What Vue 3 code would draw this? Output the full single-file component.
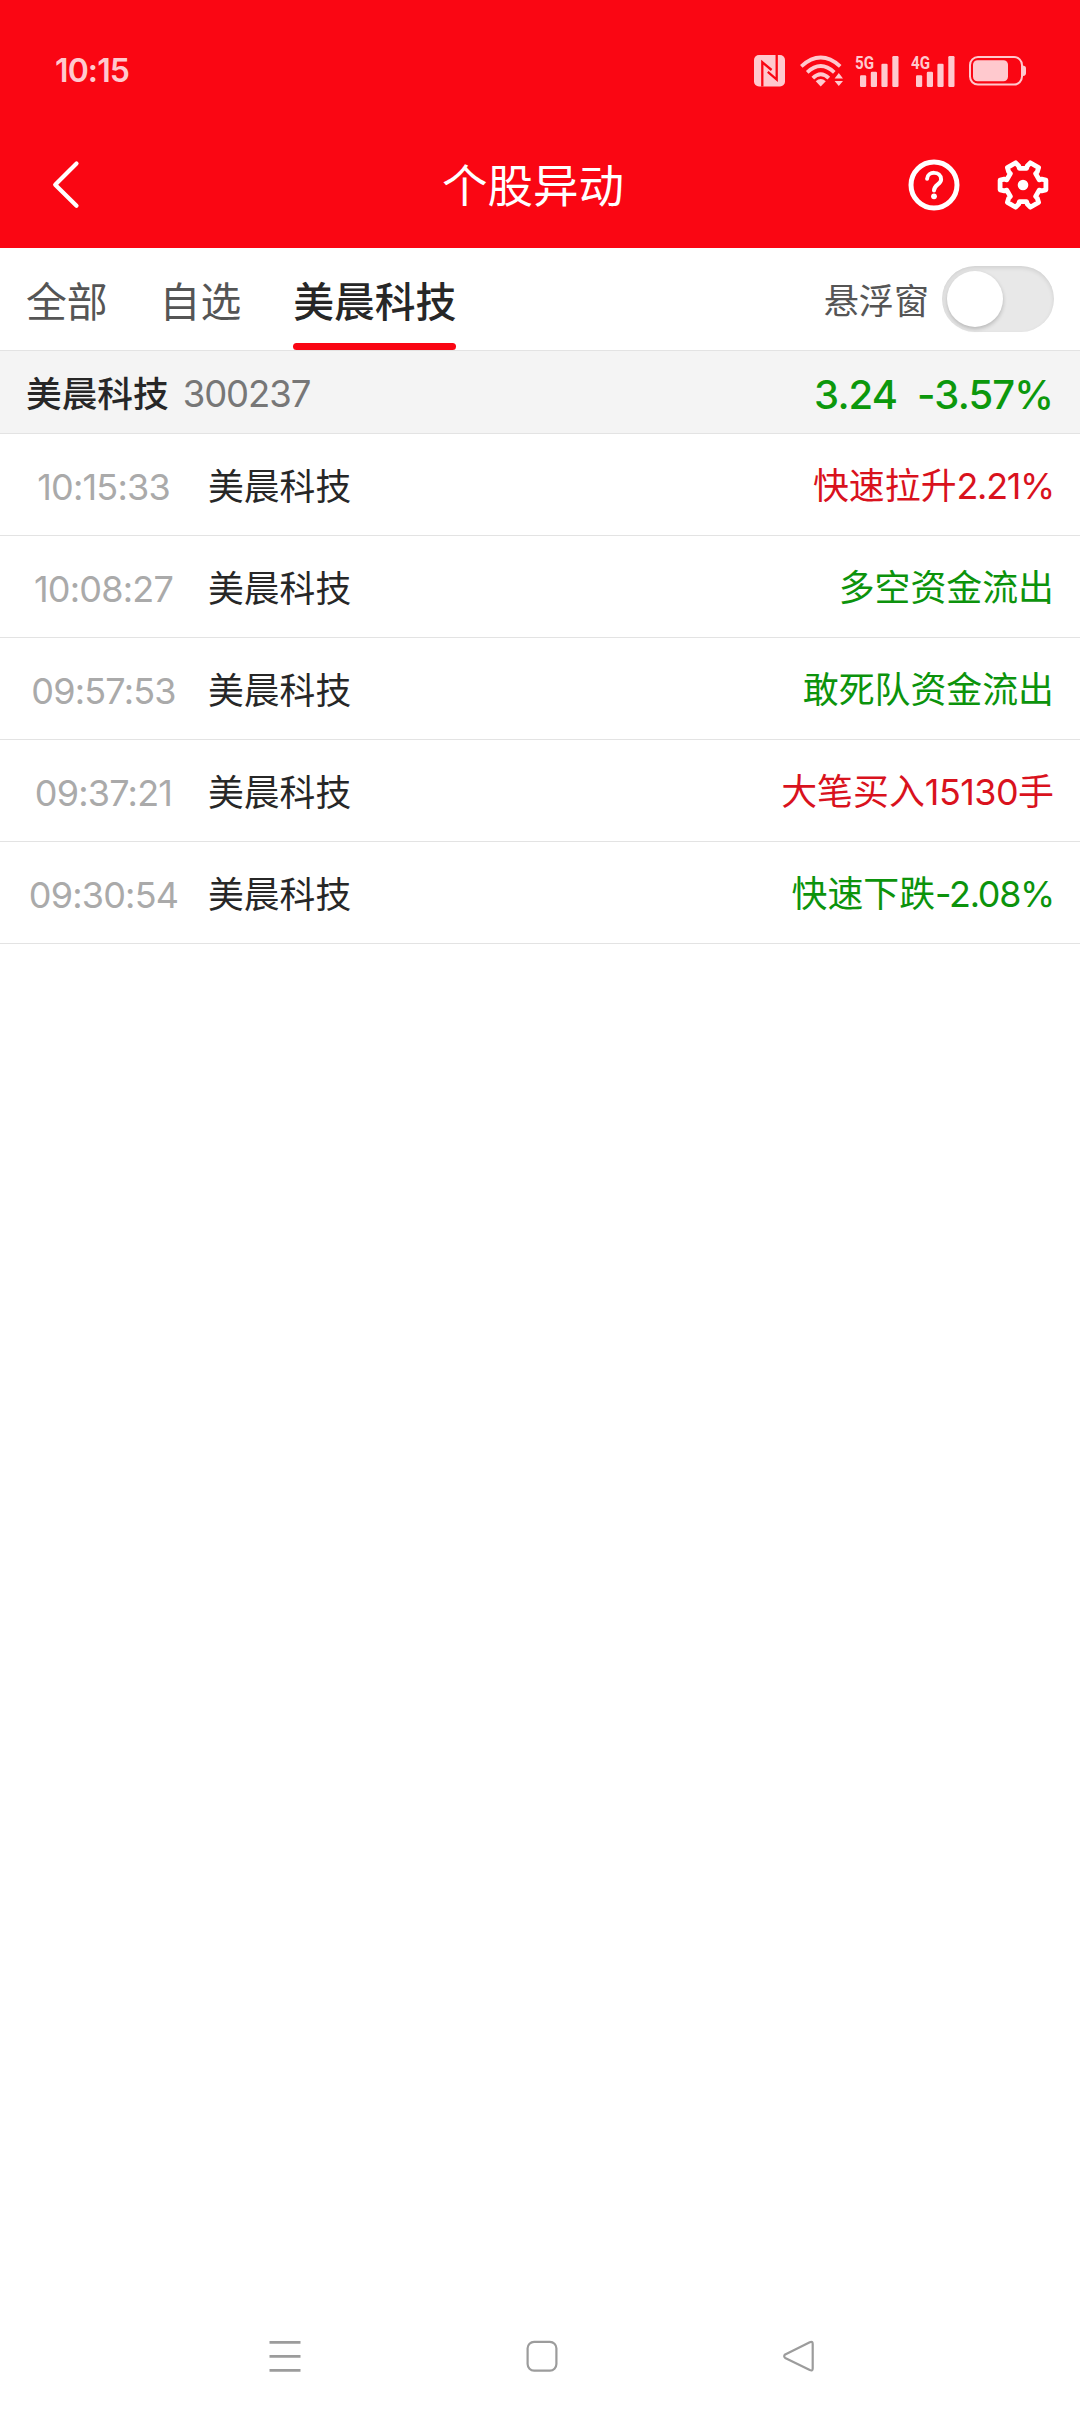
<script setup>
const tabs = [
  { label: '全部', active: false },
  { label: '自选', active: false },
  { label: '美晨科技', active: true },
]

const signals = ['5G', '4G']

const events = [
  { time: '10:15:33', name: '美晨科技', text: '快速拉升', value: '2.21%', unit: '', up: true },
  { time: '10:08:27', name: '美晨科技', text: '多空资金流出', value: '', unit: '', up: false },
  { time: '09:57:53', name: '美晨科技', text: '敢死队资金流出', value: '', unit: '', up: false },
  { time: '09:37:21', name: '美晨科技', text: '大笔买入', value: '15130', unit: '手', up: true },
  { time: '09:30:54', name: '美晨科技', text: '快速下跌', value: '-2.08%', unit: '', up: false },
]

// Six-tooth gear outline, one tooth every 60 degrees
const tooth = [[16.2, -5.2], [18.6, -5.8], [22.9, -4.8], [22.9, 4.8], [18.6, 5.8], [16.2, 5.2]]
const gearPoints = Array.from({ length: 6 }, (_, i) => {
  const a = (i * Math.PI) / 3
  return tooth
    .map(([x, y]) => `${(x * Math.cos(a) - y * Math.sin(a)).toFixed(2)},${(x * Math.sin(a) + y * Math.cos(a)).toFixed(2)}`)
    .join(' ')
}).join(' ')
</script>

<template>
  <div class="screen">
    <header class="top">
      <div class="status">
        <span class="clock">10:15</span>
        <div class="status-icons">
          <svg class="nfc" width="31" height="32" viewBox="0 0 31 32">
            <rect width="31" height="31.5" rx="5" fill="currentColor" />
            <path d="M8.3 31.5V7.2L17.6 15M22.7 0V24.5L13.8 16.8" fill="none" stroke="#fa0613" stroke-width="2.3" />
          </svg>
          <svg class="wifi" width="44" height="32" viewBox="0 0 44 32">
            <g fill="none" stroke="currentColor" stroke-width="3.8">
              <path d="M1.3 11.3Q20.7-6.2 40.2 11.3" />
              <path d="M7.2 17.3Q20.7 4.8 34.3 17.3" />
              <path d="M12.8 23.2Q20.7 15.4 28.8 23.2" />
            </g>
            <path d="M15.7 26.3Q20.7 21.6 25.8 26.3L20.7 31.5Z" fill="currentColor" />
            <path d="M34.6 23.5L38.8 18L43 23.5ZM34.6 26L38.8 31L43 26Z" fill="currentColor" />
          </svg>
          <svg v-for="s in signals" :key="s" class="signal" width="44" height="42" viewBox="0 -4 44 42">
            <text x="0" y="14.500" textLength="19" lengthAdjust="spacingAndGlyphs" class="net">{{ s }}</text>
            <g fill="currentColor">
              <rect x="5" y="21.3" width="6.2" height="11.7" rx="1.2" />
              <rect x="15.8" y="17.7" width="6.2" height="15.3" rx="1.2" />
              <rect x="26.4" y="9.7" width="6.2" height="23.3" rx="1.2" />
              <rect x="37.3" y="2" width="6.2" height="31" rx="1.2" />
            </g>
          </svg>
          <svg class="battery" width="58" height="30" viewBox="0 0 58 30">
            <rect x="1" y="1" width="52" height="27.6" rx="8" fill="none" stroke="currentColor" stroke-width="2" />
            <rect x="4" y="4.3" width="35" height="21" rx="4.5" fill="currentColor" />
            <path d="M54 9.5C56.3 9.8 57 11 57 12.500V17C57 18.600 56.3 19.700 54 20Z" fill="currentColor" />
          </svg>
        </div>
      </div>

      <nav class="titlebar">
        <div class="side">
          <svg width="28" height="50" viewBox="0 0 28 50">
            <path d="M24.500 3.500L3.200 24.700L24.500 45.700" fill="none" stroke="#fff" stroke-width="4.200" stroke-linecap="round" stroke-linejoin="round" />
          </svg>
        </div>
        <h1>个股异动</h1>
        <div class="side right">
          <svg width="52" height="52" viewBox="-26 -26 52 52" fill="none" stroke="#fff">
            <circle r="23" stroke-width="5" />
            <path d="M-6.900-6.200C-6.600-14.200 7.100-14.200 7.100-5.600C7.100-.5 0-.5 0 5.600" stroke-width="4" stroke-linecap="round" />
            <circle cy="11.300" r="2.900" fill="#fff" stroke="none" />
          </svg>
          <svg width="52" height="52" viewBox="-26 -26 52 52">
            <polygon :points="gearPoints" fill="none" stroke="#fff" stroke-width="4.800" stroke-linejoin="round" />
            <circle r="5.300" fill="#fff" />
          </svg>
        </div>
      </nav>
    </header>

    <section class="tabs">
      <div v-for="t in tabs" :key="t.label" class="tab" :class="{ active: t.active }">{{ t.label }}</div>
      <div class="floating">
        <span>悬浮窗</span>
        <div class="switch"><div class="knob"></div></div>
      </div>
    </section>

    <section class="stock">
      <span class="stock-name">美晨科技</span>
      <span class="code">300237</span>
      <span class="price">3.24</span>
      <span class="change">-3.57%</span>
    </section>

    <ul class="events">
      <li v-for="e in events" :key="e.time">
        <span class="time">{{ e.time }}</span>
        <span class="name">{{ e.name }}</span>
        <span class="desc" :class="e.up ? 'up' : 'down'">{{ e.text }}<span v-if="e.value" class="num" :class="{ count: e.unit }">{{ e.value }}</span>{{ e.unit }}</span>
      </li>
    </ul>

    <footer class="sysnav">
      <svg width="32" height="32" viewBox="0 0 32 32" stroke="#9c9c9c" stroke-width="2.800">
        <path d="M.5 2.400H31.500M.5 16.400H31.500M.5 30.400H31.500" />
      </svg>
      <svg width="32" height="32" viewBox="0 0 32 32" fill="none" stroke="#9c9c9c" stroke-width="2.200">
        <rect x="1.600" y="1.800" width="28.800" height="28.800" rx="6.500" />
      </svg>
      <svg width="32" height="32" viewBox="0 0 32 32" fill="none" stroke="#9c9c9c" stroke-width="2.200" stroke-linejoin="round">
        <path d="M2.200 14.400L26.800 2.200Q29.700 1 29.700 4V28.500Q29.700 31.400 26.800 30.100L2.200 18Q.2 16.200 2.200 14.400Z" />
      </svg>
    </footer>
  </div>
</template>

<style>
body {
  margin: 0;
  background: #fff;
}
</style>

<style scoped>
.screen {
  width: 1080px;
  height: 2412px;
  display: flex;
  flex-direction: column;
  background: #fff;
  color: #272727;
  font-family: Inter, 'Noto Sans CJK SC', sans-serif;
  line-height: 1;
  white-space: nowrap;
  overflow: hidden;
}
svg {
  display: block;
  flex: none;
}
.top {
  height: 248px;
  background: #fa0613;
}
.status {
  height: 142px;
  box-sizing: border-box;
  padding: 0 53px 0 55px;
  display: flex;
  justify-content: space-between;
  align-items: center;
  color: #ffc9ce;
}
.clock {
  font-size: 32px;
  font-weight: 600;
  letter-spacing: -0.900px;
}
.status-icons {
  display: flex;
  align-items: center;
}
.wifi {
  margin-left: 15px;
}
.signal {
  margin-left: 12px;
}
.wifi + .signal {
  margin-left: 11px;
}
.battery {
  margin-left: 14px;
}
.net {
  font: 700 18px Roboto, sans-serif;
  fill: currentColor;
}
.titlebar {
  height: 106px;
  box-sizing: border-box;
  padding: 0 31px 21px 52px;
  display: flex;
  align-items: center;
}
.side {
  width: 147px;
  display: flex;
}
.right {
  width: 182px;
  justify-content: flex-end;
  gap: 37px;
}
h1 {
  flex: 1;
  margin: 0;
  padding-top: 4px;
  text-align: center;
  color: #fff;
  font-size: 45.500px;
  font-weight: 400;
}
.tabs {
  height: 102px;
  padding: 0 26px 0 26px;
  display: flex;
  gap: 52px;
  border-bottom: 1px solid #e3e3e3;
}
.tab {
  height: 102px;
  box-sizing: border-box;
  line-height: 108px;
  font-size: 40.800px;
  color: #555;
}
.tab.active {
  color: #272727;
  font-weight: 500;
  position: relative;
}
.tab.active::after {
  content: '';
  position: absolute;
  left: 0;
  right: 0;
  bottom: 0;
  height: 7px;
  border-radius: 4px;
  background: #fa0613;
}
.floating {
  margin-left: auto;
  display: flex;
  align-items: center;
  gap: 13px;
  font-size: 35.100px;
  color: #555;
}
.floating span {
  padding-top: 5px;
}
.switch {
  width: 112px;
  height: 66px;
  box-sizing: border-box;
  padding: 5px;
  border-radius: 33px;
  background: #e8e8e8;
  box-shadow: inset 0 2px 4px rgba(0, 0, 0, 0.1);
}
.knob {
  width: 56px;
  height: 56px;
  border-radius: 50%;
  background: #fff;
  box-shadow: 0 2px 4px rgba(0, 0, 0, 0.22);
}
.stock {
  height: 77px;
  padding: 5px 27px 0 26px;
  display: flex;
  align-items: center;
  background: #f4f4f4;
  border-bottom: 1px solid #e3e3e3;
}
.stock-name {
  font-size: 35.700px;
  font-weight: 500;
}
.code {
  margin-left: 14px;
  font-size: 36.500px;
  letter-spacing: -1.100px;
  color: #777;
}
.price,
.change {
  color: #0c980c;
  font-size: 40px;
  font-weight: 500;
  letter-spacing: -0.900px;
}
.price {
  margin-left: auto;
}
.change {
  margin-left: 20px;
}
.events {
  margin: 0;
  padding: 0;
  list-style: none;
}
li {
  height: 101px;
  padding-right: 26px;
  display: flex;
  align-items: center;
  border-bottom: 1px solid #e3e3e3;
  font-size: 36px;
}
.time {
  width: 207px;
  margin-right: 1px;
  padding-top: 4px;
  text-align: center;
  color: #aaa;
  letter-spacing: -0.800px;
}
.name {
  font-family: 'Noto Sans CJK SC', sans-serif;
  font-size: 35.800px;
}
.desc {
  margin-left: auto;
  padding-top: 5px;
  font-size: 35.900px;
}
.num {
  letter-spacing: -1.300px;
}
.num.count {
  letter-spacing: -0.500px;
}
.up {
  color: #d9121d;
}
.down {
  color: #0c930c;
}
.sysnav {
  margin-top: auto;
  height: 72px;
  padding: 0 265px 0 269px;
  display: flex;
  justify-content: space-between;
}
</style>
